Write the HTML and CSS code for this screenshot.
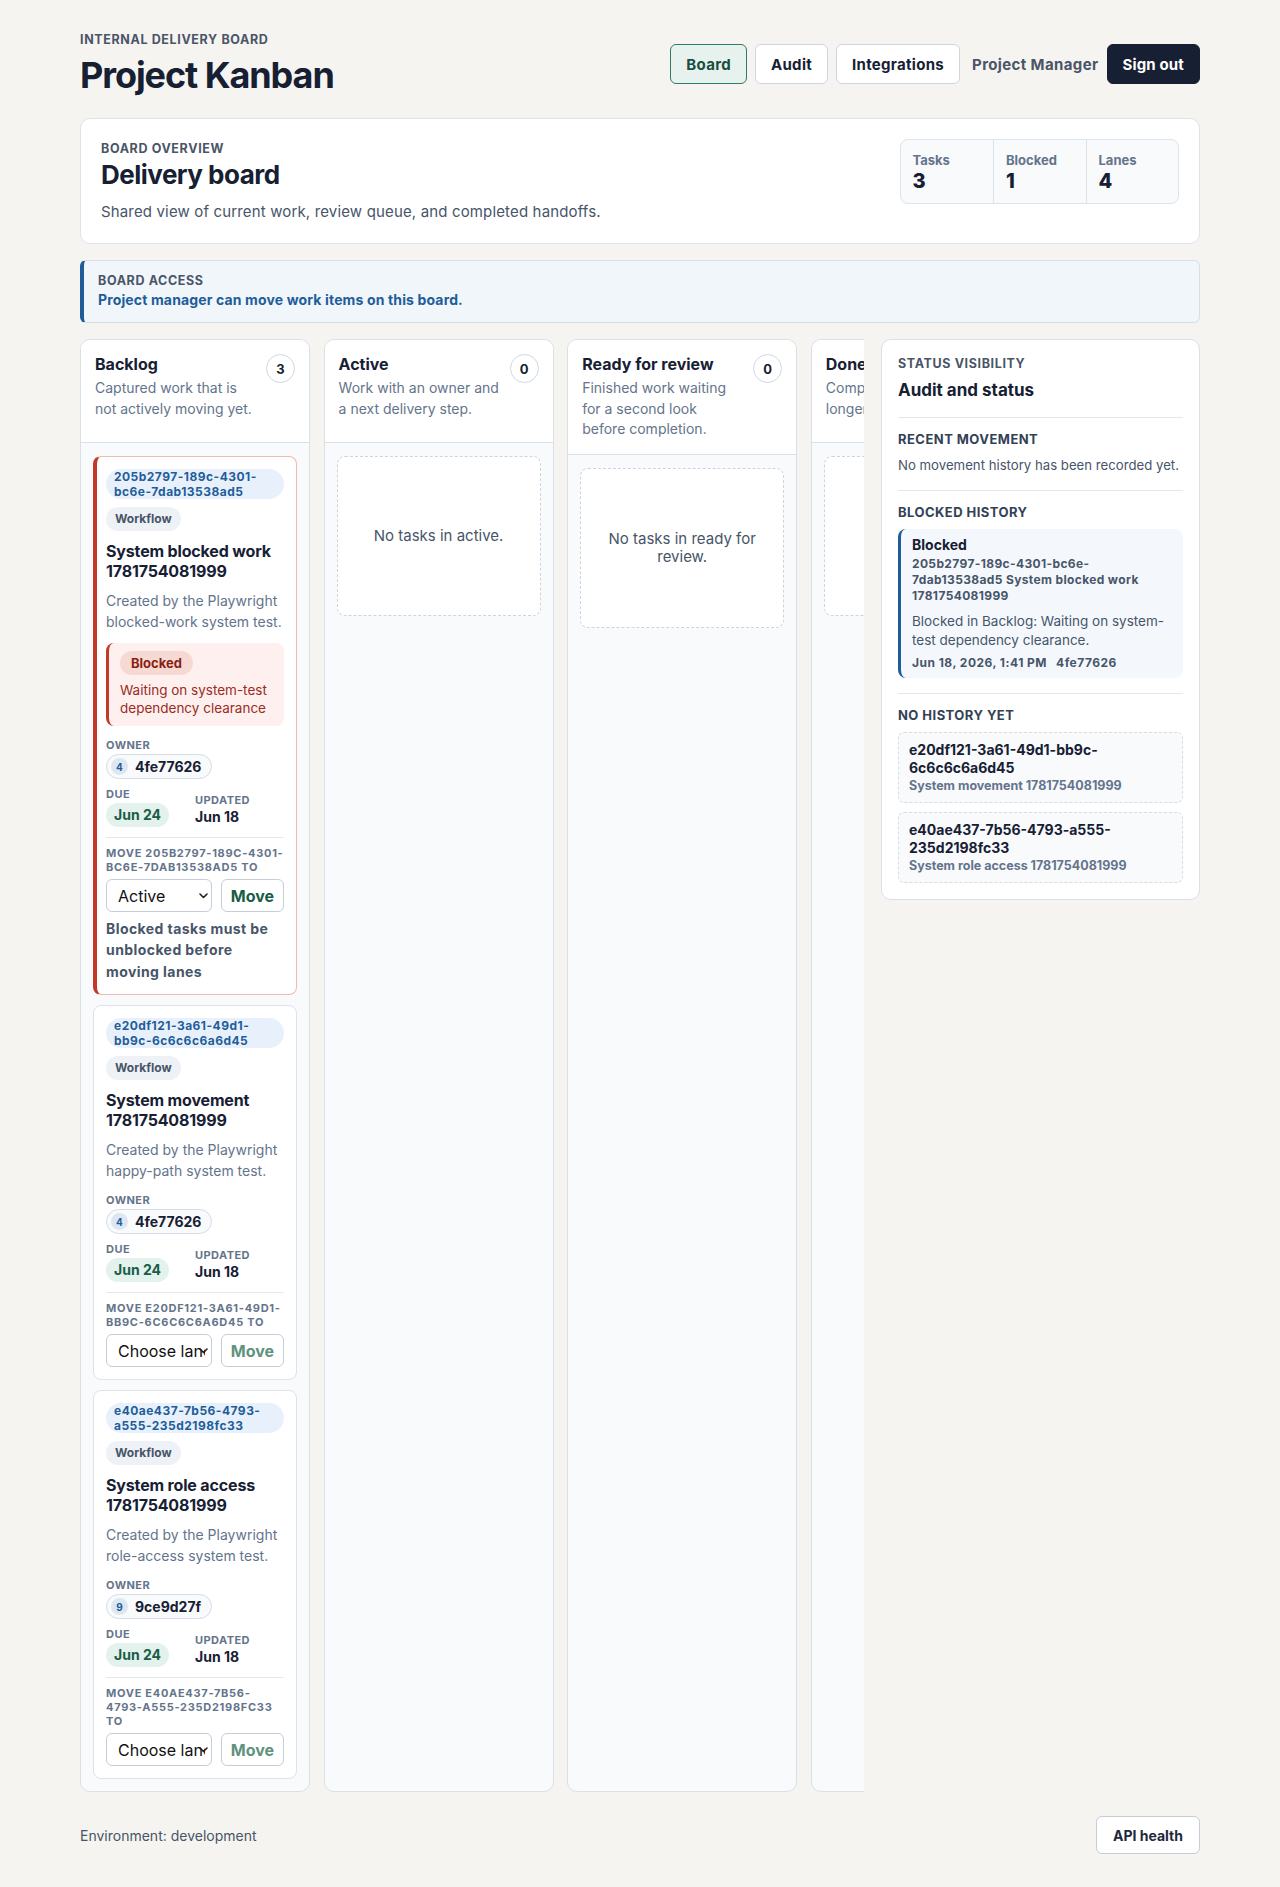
FILE: index.html
```html
<!DOCTYPE html>
<html lang="en">
<head>
  <meta charset="UTF-8">
  <title>Project Kanban</title>
  <meta name="viewport" content="width=device-width, initial-scale=1.0">
  <link rel="stylesheet" href="styles.css">
</head>
<body>

<div class="page">

  <!-- Top bar -->
  <header class="topbar">
    <div>
      <div class="eyebrow">Internal delivery board</div>
      <h1>Project Kanban</h1>
    </div>
    <nav class="nav">
      <a class="nav-btn active" href="#">Board</a>
      <a class="nav-btn" href="#">Audit</a>
      <a class="nav-btn" href="#">Integrations</a>
      <span class="role">Project Manager</span>
      <button class="nav-btn signout">Sign out</button>
    </nav>
  </header>

  <!-- Overview -->
  <section class="overview">
    <div>
      <div class="eyebrow">Board overview</div>
      <h2>Delivery board</h2>
      <p>Shared view of current work, review queue, and completed handoffs.</p>
    </div>
    <dl class="stats">
      <div><dt>Tasks</dt><dd>3</dd></div>
      <div><dt>Blocked</dt><dd>1</dd></div>
      <div><dt>Lanes</dt><dd>4</dd></div>
    </dl>
  </section>

  <div class="access">
    <div class="eyebrow">Board access</div>
    <p>Project manager can move work items on this board.</p>
  </div>

  <div class="workspace">

    <div class="board">

      <!-- Backlog -->
      <section class="lane">
        <header class="lane-head">
          <div>
            <h3>Backlog</h3>
            <p>Captured work that is not actively moving yet.</p>
          </div>
          <span class="count">3</span>
        </header>
        <div class="lane-body">

          <article class="task blocked">
            <div class="task-id">205b2797-189c-4301-bc6e-7dab13538ad5</div>
            <span class="tag">Workflow</span>
            <h4 class="task-title">System blocked work 1781754081999</h4>
            <p class="task-desc">Created by the Playwright blocked-work system test.</p>
            <div class="blocker">
              <span class="blocker-tag">Blocked</span>
              <p>Waiting on system-test dependency clearance</p>
            </div>
            <div class="meta-label">Owner</div>
            <span class="owner"><span class="avatar">4</span>4fe77626</span>
            <div class="dates">
              <div>
                <div class="meta-label">Due</div>
                <span class="due">Jun 24</span>
              </div>
              <div>
                <div class="meta-label">Updated</div>
                <div class="updated">Jun 18</div>
              </div>
            </div>
            <div class="move">
              <div class="meta-label">Move 205b2797-189c-4301-bc6e-7dab13538ad5 to</div>
              <div class="move-row">
                <div class="select-wrap">
                  <select>
                    <option>Active</option>
                  </select>
                  <svg class="chev" width="9" height="6" viewBox="0 0 9 6"><path d="M1 1l3.5 3.5L8 1" fill="none" stroke="#222" stroke-width="1.6" stroke-linecap="round" stroke-linejoin="round"/></svg>
                </div>
                <button class="move-btn">Move</button>
              </div>
              <p class="blocked-note">Blocked tasks must be unblocked before moving lanes</p>
            </div>
          </article>

          <article class="task">
            <div class="task-id">e20df121-3a61-49d1-bb9c-6c6c6c6a6d45</div>
            <span class="tag">Workflow</span>
            <h4 class="task-title">System movement 1781754081999</h4>
            <p class="task-desc">Created by the Playwright happy-path system test.</p>
            <div class="meta-label">Owner</div>
            <span class="owner"><span class="avatar">4</span>4fe77626</span>
            <div class="dates">
              <div>
                <div class="meta-label">Due</div>
                <span class="due">Jun 24</span>
              </div>
              <div>
                <div class="meta-label">Updated</div>
                <div class="updated">Jun 18</div>
              </div>
            </div>
            <div class="move">
              <div class="meta-label">Move e20df121-3a61-49d1-bb9c-6c6c6c6a6d45 to</div>
              <div class="move-row">
                <div class="select-wrap">
                  <select>
                    <option>Choose lane</option>
                  </select>
                  <svg class="chev" width="9" height="6" viewBox="0 0 9 6"><path d="M1 1l3.5 3.5L8 1" fill="none" stroke="#222" stroke-width="1.6" stroke-linecap="round" stroke-linejoin="round"/></svg>
                </div>
                <button class="move-btn" disabled>Move</button>
              </div>
            </div>
          </article>

          <article class="task">
            <div class="task-id">e40ae437-7b56-4793-a555-235d2198fc33</div>
            <span class="tag">Workflow</span>
            <h4 class="task-title">System role access 1781754081999</h4>
            <p class="task-desc">Created by the Playwright role-access system test.</p>
            <div class="meta-label">Owner</div>
            <span class="owner"><span class="avatar">9</span>9ce9d27f</span>
            <div class="dates">
              <div>
                <div class="meta-label">Due</div>
                <span class="due">Jun 24</span>
              </div>
              <div>
                <div class="meta-label">Updated</div>
                <div class="updated">Jun 18</div>
              </div>
            </div>
            <div class="move">
              <div class="meta-label">Move e40ae437-7b56-4793-a555-235d2198fc33 to</div>
              <div class="move-row">
                <div class="select-wrap">
                  <select>
                    <option>Choose lane</option>
                  </select>
                  <svg class="chev" width="9" height="6" viewBox="0 0 9 6"><path d="M1 1l3.5 3.5L8 1" fill="none" stroke="#222" stroke-width="1.6" stroke-linecap="round" stroke-linejoin="round"/></svg>
                </div>
                <button class="move-btn" disabled>Move</button>
              </div>
            </div>
          </article>

        </div>
      </section>

      <!-- Active -->
      <section class="lane">
        <header class="lane-head">
          <div>
            <h3>Active</h3>
            <p>Work with an owner and a next delivery step.</p>
          </div>
          <span class="count">0</span>
        </header>
        <div class="lane-body">
          <div class="empty">No tasks in active.</div>
        </div>
      </section>

      <!-- Ready for review -->
      <section class="lane">
        <header class="lane-head">
          <div>
            <h3>Ready for review</h3>
            <p>Finished work waiting for a second look before completion.</p>
          </div>
          <span class="count">0</span>
        </header>
        <div class="lane-body">
          <div class="empty">No tasks in ready for review.</div>
        </div>
      </section>

      <!-- Done -->
      <section class="lane">
        <header class="lane-head">
          <div>
            <h3>Done</h3>
            <p>Completed work that no longer needs attention.</p>
          </div>
          <span class="count">0</span>
        </header>
        <div class="lane-body">
          <div class="empty">No tasks in done.</div>
        </div>
      </section>

    </div>

    <!-- Audit sidebar -->
    <aside class="audit">
      <div>
        <div class="eyebrow">Status visibility</div>
        <h2>Audit and status</h2>
      </div>

      <div class="audit-section">
        <h5>Recent movement</h5>
        <p class="muted">No movement history has been recorded yet.</p>
      </div>

      <div class="audit-section">
        <h5>Blocked history</h5>
        <div class="history">
          <strong>Blocked</strong>
          <div class="ref">205b2797-189c-4301-bc6e-7dab13538ad5 System blocked work 1781754081999</div>
          <p>Blocked in Backlog: Waiting on system-test dependency clearance.</p>
          <div class="stamp"><span>Jun 18, 2026, 1:41 PM</span><span>4fe77626</span></div>
        </div>
      </div>

      <div class="audit-section">
        <h5>No history yet</h5>
        <div class="pending">
          <strong>e20df121-3a61-49d1-bb9c-6c6c6c6a6d45</strong>
          <span>System movement 1781754081999</span>
        </div>
        <div class="pending">
          <strong>e40ae437-7b56-4793-a555-235d2198fc33</strong>
          <span>System role access 1781754081999</span>
        </div>
      </div>
    </aside>

  </div>

  <footer class="foot">
    <span>Environment: development</span>
    <button class="health-btn">API health</button>
  </footer>

</div>

</body>
</html>
```

FILE: styles.css
```css
* {
  box-sizing: border-box;
}

html, body {
  margin: 0;
  padding: 0;
}

body {
  font-family: Inter, "Noto Sans", sans-serif;
  background: #f5f4f0;
  color: #172033;
}

h1, h2, h3, h4, h5, p, dl, dd {
  margin: 0;
}

.page {
  max-width: 1120px;
  margin: 0 auto;
  padding: 32px 0 34px;
}

.eyebrow {
  font-size: 12.5px;
  line-height: 16px;
  font-weight: 700;
  text-transform: uppercase;
  letter-spacing: 0.05em;
  color: #4a5568;
}

/* top bar */

.topbar {
  display: flex;
  justify-content: space-between;
  align-items: center;
  margin-bottom: 22px;
}

h1 {
  font-size: 36px;
  line-height: 42px;
  font-weight: 700;
  letter-spacing: -0.03em;
  margin-top: 6px;
}

.nav {
  display: flex;
  align-items: center;
  gap: 8px;
}

.nav-btn {
  display: inline-flex;
  align-items: center;
  height: 40px;
  padding: 0 15px;
  border: 1px solid #cfd6df;
  border-radius: 6px;
  background: #fff;
  color: #172033;
  font-family: inherit;
  font-size: 15px;
  font-weight: 700;
  letter-spacing: 0.02em;
  text-decoration: none;
}

.nav-btn.active {
  background: #e7f2ee;
  border-color: #2e7b67;
  color: #174f40;
}

.role {
  font-size: 15px;
  font-weight: 700;
  letter-spacing: 0.025em;
  color: #4a5568;
  padding-left: 4px;
}

.signout {
  background: #172033;
  border-color: #172033;
  color: #fff;
  letter-spacing: 0.01em;
  cursor: pointer;
}

/* overview */

.overview {
  display: flex;
  justify-content: space-between;
  align-items: flex-start;
  background: #fff;
  border: 1px solid #dde3ea;
  border-radius: 10px;
  padding: 20px;
}

.overview .eyebrow {
  line-height: 20px;
}

.overview h2 {
  font-size: 26px;
  line-height: 31px;
  letter-spacing: -0.02em;
}

.overview p {
  margin-top: 11px;
  font-size: 15px;
  line-height: 22px;
  letter-spacing: 0.01em;
  color: #475569;
}

.stats {
  display: grid;
  grid-template-columns: repeat(3, 92.5px);
  border: 1px solid #dde3ea;
  border-radius: 8px;
  background: #f8fafc;
}

.stats div {
  padding: 12px 12px 10px;
}

.stats div + div {
  border-left: 1px solid #dde3ea;
}

.stats dt {
  font-size: 13px;
  line-height: 17px;
  font-weight: 700;
  color: #64748b;
}

.stats dd {
  font-size: 20px;
  line-height: 24px;
  font-weight: 800;
}

/* access banner */

.access {
  margin-top: 16px;
  background: #f1f6fb;
  border: 1px solid #d3dfec;
  border-left: 4px solid #1f5d99;
  border-radius: 6px;
  padding: 12px 14px 13px;
}

.access p {
  margin-top: 2px;
  font-size: 14px;
  line-height: 18px;
  font-weight: 700;
  letter-spacing: 0.01em;
  color: #1f5d99;
}

/* board + sidebar */

.workspace {
  display: grid;
  grid-template-columns: minmax(0, 1fr) 319px;
  column-gap: 17px;
  align-items: start;
  margin-top: 16px;
}

.board {
  display: flex;
  gap: 13.6px;
  overflow-x: auto;
  scrollbar-width: none;
}

.lane {
  flex: 0 0 230px;
  display: flex;
  flex-direction: column;
  background: #f8fafc;
  border: 1px solid #d9e0e8;
  border-radius: 10px;
  overflow: hidden;
}

.lane-head {
  display: flex;
  justify-content: space-between;
  align-items: flex-start;
  gap: 10px;
  min-height: 103px;
  padding: 14px;
  background: #fff;
  border-bottom: 1px solid #d9e0e8;
}

.lane-head h3 {
  font-size: 16px;
  line-height: 21px;
  font-weight: 700;
}

.lane-head p {
  margin-top: 3px;
  font-size: 14px;
  line-height: 20.5px;
  color: #64748b;
}

.count {
  flex: 0 0 29px;
  height: 29px;
  display: grid;
  place-items: center;
  border: 1px solid #cfd8e3;
  border-radius: 50%;
  background: #fff;
  font-size: 13px;
  font-weight: 700;
}

.lane-body {
  display: flex;
  flex-direction: column;
  gap: 10px;
  padding: 13px 12px 12px;
}

.empty {
  min-height: 160px;
  display: grid;
  place-items: center;
  padding: 16px 20px;
  border: 1px dashed #cbd5e1;
  border-radius: 8px;
  background: #fff;
  text-align: center;
  font-size: 15px;
  line-height: 18px;
  color: #475569;
}

/* task card */

.task {
  display: flex;
  flex-direction: column;
  align-items: flex-start;
  background: #fff;
  border: 1px solid #dde3ea;
  border-radius: 8px;
  padding: 12px;
}

.task.blocked {
  border-color: #efbab3;
  border-left: 4px solid #c0392b;
  padding-left: 9px;
}

.task-id {
  align-self: stretch;
  min-height: 30px;
  display: flex;
  align-items: center;
  padding: 0 8px;
  border-radius: 15px;
  background: #e8f1fb;
  color: #1f5d99;
  font-size: 12px;
  line-height: 15px;
  font-weight: 700;
  letter-spacing: 0.04em;
}

.tag {
  margin-top: 8px;
  padding: 0 9px;
  border-radius: 999px;
  background: #eef1f5;
  color: #475569;
  font-size: 12px;
  line-height: 24px;
  font-weight: 700;
}

.task-title {
  margin-top: 10px;
  font-size: 16px;
  line-height: 20px;
  font-weight: 700;
  letter-spacing: -0.01em;
}

.task-desc {
  margin-top: 9px;
  font-size: 14px;
  line-height: 21px;
  color: #64748b;
}

.blocker {
  align-self: stretch;
  display: flex;
  flex-direction: column;
  align-items: flex-start;
  margin-top: 11px;
  padding: 8px 10px 9px 11px;
  background: #fdf0ee;
  border-left: 3px solid #c0392b;
  border-radius: 8px;
}

.blocker-tag {
  padding: 0 11px;
  border-radius: 999px;
  background: #f7d9d4;
  color: #8a1f14;
  font-size: 13px;
  line-height: 24px;
  font-weight: 700;
}

.blocker p {
  margin-top: 7px;
  font-size: 13.5px;
  line-height: 17.6px;
  color: #9b2c1f;
}

.meta-label {
  margin-top: 12px;
  font-size: 11px;
  line-height: 14px;
  font-weight: 700;
  text-transform: uppercase;
  letter-spacing: 0.04em;
  color: #64748b;
}

.owner {
  margin-top: 2px;
  display: inline-flex;
  align-items: center;
  gap: 7px;
  height: 25px;
  padding: 0 10px 0 4px;
  border: 1px solid #d5dde6;
  border-radius: 999px;
  background: #f8fafc;
  font-size: 14px;
  font-weight: 700;
}

.avatar {
  width: 17px;
  height: 17px;
  display: grid;
  place-items: center;
  border-radius: 50%;
  background: #dde7f2;
  color: #1f5d99;
  font-size: 10px;
  font-weight: 700;
}

.dates {
  align-self: stretch;
  margin-top: 8px;
  display: grid;
  grid-template-columns: 1fr 1fr;
  align-items: end;
}

.dates .meta-label {
  margin-top: 0;
}

.due {
  display: inline-block;
  margin-top: 2px;
  padding: 0 8px;
  border-radius: 999px;
  background: #e3f2ec;
  color: #1a5c48;
  font-size: 14px;
  line-height: 24px;
  font-weight: 700;
}

.updated {
  font-size: 14px;
  line-height: 20px;
  font-weight: 700;
}

.move {
  align-self: stretch;
  margin-top: 10px;
  padding-top: 8px;
  border-top: 1px solid #e2e8f0;
}

.move .meta-label {
  margin-top: 0;
  letter-spacing: 0.065em;
}

.move-row {
  margin-top: 5px;
  display: flex;
  gap: 9px;
}

.select-wrap {
  position: relative;
  flex: 1;
  min-width: 0;
}

.select-wrap select {
  width: 100%;
  height: 33px;
  padding: 0 6px 0 11px;
  border: 1px solid #c5cdd8;
  border-radius: 6px;
  background: #fff;
  color: #111;
  font-family: inherit;
  font-size: 16px;
  appearance: none;
  -webkit-appearance: none;
}

.chev {
  position: absolute;
  right: 4px;
  top: 14px;
  pointer-events: none;
}

.move-btn {
  height: 33px;
  padding: 0 9px;
  border: 1px solid #c5cdd8;
  border-radius: 6px;
  background: #fff;
  color: #1a5c48;
  font-family: inherit;
  font-size: 16px;
  font-weight: 700;
  cursor: pointer;
}

.move-btn:disabled {
  color: #5f927f;
  cursor: default;
}

.blocked-note {
  margin-top: 6px;
  font-size: 14px;
  line-height: 21.3px;
  font-weight: 700;
  letter-spacing: 0.03em;
  color: #475569;
}

/* audit sidebar */

.audit {
  display: flex;
  flex-direction: column;
  gap: 15px;
  background: #fff;
  border: 1px solid #d9e0e8;
  border-radius: 10px;
  padding: 16px;
}

.audit h2 {
  margin-top: 6px;
  font-size: 17px;
  line-height: 24px;
  font-weight: 700;
}

.audit-section {
  border-top: 1px solid #e2e8f0;
  padding-top: 12px;
}

.audit-section h5 {
  margin-bottom: 8px;
  font-size: 13px;
  line-height: 18px;
  font-weight: 700;
  text-transform: uppercase;
  letter-spacing: 0.035em;
  color: #334155;
}

.muted {
  font-size: 13.2px;
  line-height: 19px;
  white-space: nowrap;
  color: #475569;
}

.history {
  padding: 7px 16px 7px 11px;
  background: #f4f8fd;
  border-left: 3px solid #1f5d99;
  border-radius: 8px;
}

.history strong {
  display: block;
  font-size: 14px;
  line-height: 18px;
}

.history .ref {
  margin-top: 2px;
  font-size: 12px;
  line-height: 16px;
  font-weight: 700;
  letter-spacing: 0.03em;
  color: #475569;
}

.history p {
  margin-top: 8px;
  font-size: 13.5px;
  line-height: 19px;
  color: #475569;
}

.history .stamp {
  margin-top: 5px;
  display: flex;
  gap: 9px;
  font-size: 12px;
  line-height: 16px;
  font-weight: 700;
  letter-spacing: 0.04em;
  color: #475569;
}

.pending {
  padding: 8px 10px;
  border: 1px dashed #d5dde6;
  border-radius: 6px;
  background: #f8fafc;
}

.pending + .pending {
  margin-top: 9px;
}

.pending strong {
  display: block;
  font-size: 14px;
  line-height: 17.6px;
}

.pending span {
  display: block;
  margin-top: 2px;
  font-size: 12.5px;
  line-height: 16px;
  font-weight: 700;
  color: #64748b;
}

/* footer */

.foot {
  margin-top: 24px;
  display: flex;
  justify-content: space-between;
  align-items: center;
  font-size: 14px;
  color: #475569;
}

.health-btn {
  height: 38px;
  padding: 0 16px;
  border: 1px solid #c5cdd8;
  border-radius: 6px;
  background: #fff;
  color: #1e293b;
  font-family: inherit;
  font-size: 14px;
  font-weight: 700;
  cursor: pointer;
}
```
